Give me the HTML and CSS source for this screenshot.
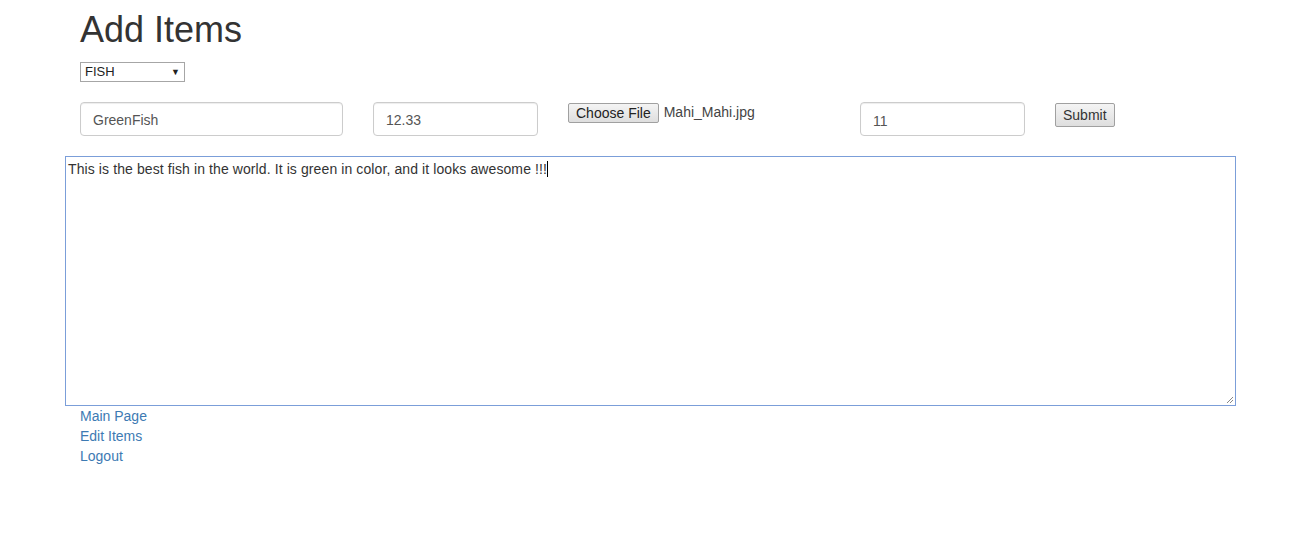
FILE: index.html
```html
<!DOCTYPE html>
<html>
<head>
<meta charset="utf-8">
<link rel="stylesheet" href="styles.css">
</head>
<body>
<div class="page">
  <h1 class="title">Add Items</h1>
  <div class="select-wrap">
    <div class="select">
      <span>FISH</span>
      <span class="arrow">&#9660;</span>
    </div>
  </div>
  <div class="row">
    <div class="input w-name">GreenFish</div>
    <div class="input w-price">12.33</div>
    <div class="file">
      <span class="btn">Choose File</span>
      <span class="fname">Mahi_Mahi.jpg</span>
    </div>
    <div class="input w-qty">11</div>
    <span class="btn submit">Submit</span>
  </div>
</div>
<div class="textarea">
  <span class="ta-text">This is the best fish in the world. It is green in color, and it looks awesome !!!</span><span class="caret"></span>
  <svg class="grip" width="9" height="9" viewBox="0 0 9 9"><path d="M8 2 L2 8 M8 5 L5 8" stroke="#888" stroke-width="1"/></svg>
</div>
<div class="links">
  <a href="#">Main Page</a>
  <a href="#">Edit Items</a>
  <a href="#">Logout</a>
</div>
</body>
</html>
```
FILE: styles.css
```css
* { box-sizing: border-box; }
body {
  margin: 0;
  font-family: "Liberation Sans", Arial, sans-serif;
  font-size: 14px;
  color: #333;
  background: #fff;
  line-height: 20px;
}
.page { padding-left: 80px; }
.title {
  margin: 0;
  padding-top: 10px;
  font-size: 36px;
  font-weight: 500;
  line-height: 40px;
  color: #333;
}
.select-wrap { padding-top: 12px; }
.select {
  width: 105px;
  height: 20px;
  border: 1px solid #a6a6a6;
  display: flex;
  justify-content: space-between;
  align-items: center;
  padding: 0 4px 0 4px;
  font-size: 13px;
  color: #222;
}
.arrow { font-size: 9px; color: #222; }
.row {
  display: flex;
  align-items: flex-start;
  margin-top: 20px;
}
.input {
  height: 34px;
  border: 1px solid #ccc;
  border-radius: 4px;
  padding: 7px 12px;
  color: #555;
  font-size: 14px;
  line-height: 20px;
  box-shadow: inset 0 1px 1px rgba(0,0,0,.075);
}
.w-name { width: 263px; margin-right: 30px; }
.w-price { width: 165px; margin-right: 30px; }
.w-qty { width: 165px; margin-right: 30px; padding-top: 8px; }
.file {
  width: 292px;
  display: flex;
  align-items: flex-start;
  padding-top: 1px;
}
.btn {
  display: inline-block;
  border: 1px solid #a0a0a0;
  border-radius: 2px;
  background: linear-gradient(#f4f4f4, #dedede);
  color: #222;
  font-size: 14px;
  line-height: 18px;
  padding: 0 7px;
}
.fname { margin-left: 5px; color: #444; line-height: 18px; }
.submit { margin-top: 1px; line-height: 22px; padding: 0 7px; color: #333; font-size: 14px; }
.textarea {
  position: relative;
  margin: 20px 0 0 65px;
  width: 1171px;
  height: 250px;
  border: 1px solid #7b9ed9;
  padding: 2px 2px;
  line-height: 20px;
  color: #333;
}
.ta-text { letter-spacing: 0.1px; }
.caret {
  display: inline-block;
  width: 1px;
  height: 16px;
  background: #000;
  vertical-align: -3px;
}
.grip { position: absolute; right: 1px; bottom: 1px; }
.links {
  display: flex;
  flex-direction: column;
  padding-left: 80px;
  margin-top: 0;
}
.links a {
  color: #3d7ab3;
  text-decoration: none;
  line-height: 20px;
}
```
